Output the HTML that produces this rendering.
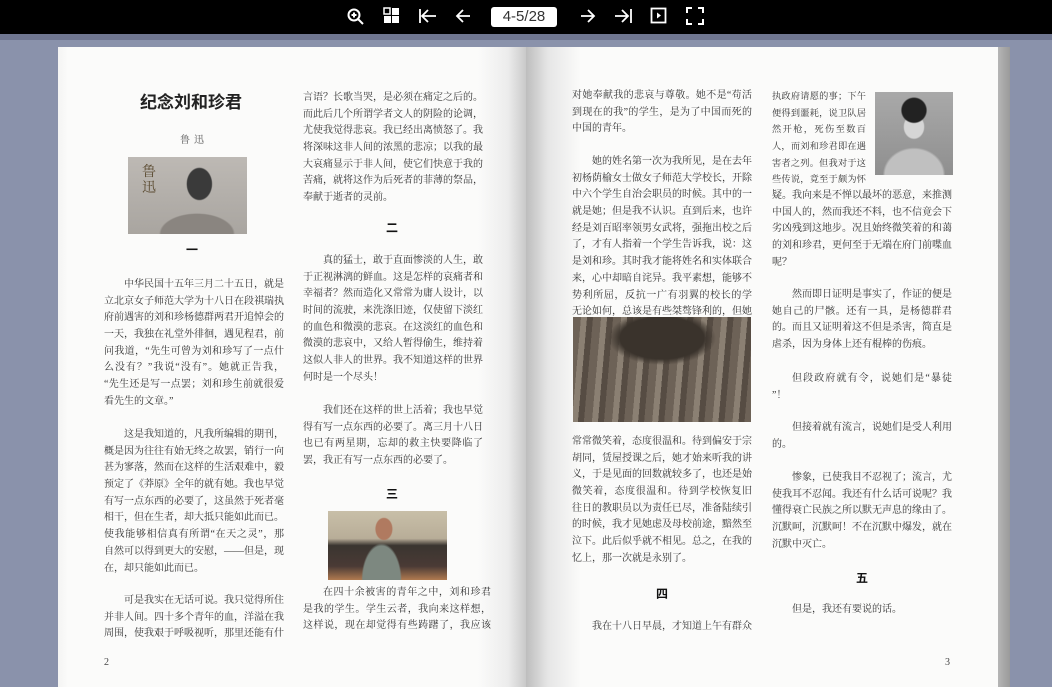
<!DOCTYPE html>
<html><head><meta charset="utf-8">
<style>
*{margin:0;padding:0;box-sizing:border-box}
body{width:1052px;height:684px;overflow:hidden;background:#8a92ab;position:relative;font-family:"Liberation Serif","Noto Serif CJK SC",serif;color:#222}
#bar{position:absolute;left:0;top:0;width:1052px;height:34px;background:#000}
#band{position:absolute;left:0;top:34px;width:1052px;height:6px;background:#6f7690}
.pg{position:absolute;top:47px;height:640px;background:#fbfbfa}
#lp{left:58px;width:468px;background:linear-gradient(to right,#f4f4f3 0,#fbfbfa 10px,#fbfbfa 420px,#ececec 450px,#c9c9c9 468px)}
#rp{left:526px;width:472px;background:linear-gradient(to right,#bdbdbd 0,#e6e6e6 22px,#fbfbfa 55px,#fbfbfa 470px)}
#edge{position:absolute;left:998px;top:47px;width:12px;height:640px;background:linear-gradient(to right,#b5b5b5,#9a9a9a)}
.b{position:absolute;width:180px;font-size:10px;line-height:16.7px;color:#333}
.b div{height:16.7px;overflow:hidden;white-space:nowrap}
.b div.j{text-align:justify;text-align-last:justify;white-space:normal}
.i{text-indent:20px}
.n{font-size:9.2px}
.h{position:absolute;font-family:"Liberation Sans","Noto Sans CJK SC",sans-serif;font-weight:bold;font-size:12px;color:#111}
.img{position:absolute}
.ic{position:absolute;top:7px}
</style></head><body>
<div id="bar"></div><div id="band"></div>
<svg class="ic" style="left:346px" width="20" height="20" viewBox="0 0 20 20"><circle cx="8" cy="8" r="5.5" fill="none" stroke="#fff" stroke-width="2"/><path d="M12 12l5 5M5.5 8h5M8 5.5v5" stroke="#fff" stroke-width="2"/></svg>
<svg class="ic" style="left:383px" width="18" height="18" viewBox="0 0 18 18"><rect x="1" y="1" width="6" height="6" fill="none" stroke="#fff" stroke-width="1.5"/><rect x="9" y="1" width="7" height="7" fill="#fff"/><rect x="1" y="9" width="7" height="7" fill="#fff"/><rect x="9" y="9" width="7" height="7" fill="#fff"/></svg>
<svg class="ic" style="left:418px" width="20" height="20" viewBox="0 0 20 20"><path d="M2 2v14M18 9H5M10 3l-6 6 6 6" stroke="#fff" stroke-width="1.8" fill="none"/></svg>
<svg class="ic" style="left:453px" width="20" height="20" viewBox="0 0 20 20"><path d="M17 9H4M10 3l-6 6 6 6" stroke="#fff" stroke-width="1.8" fill="none"/></svg>
<div style="position:absolute;left:491px;top:7px;width:66px;height:20px;background:#fff;border-radius:3px;font-family:'Liberation Sans',sans-serif;font-size:15px;line-height:20px;text-align:center;color:#333">4-5/28</div>
<svg class="ic" style="left:578px" width="20" height="20" viewBox="0 0 20 20"><path d="M3 9h13M10 3l6 6-6 6" stroke="#fff" stroke-width="1.8" fill="none"/></svg>
<svg class="ic" style="left:613px" width="20" height="20" viewBox="0 0 20 20"><path d="M2 9h13M9 3l6 6-6 6M18 2v14" stroke="#fff" stroke-width="1.8" fill="none"/></svg>
<svg class="ic" style="left:650px" width="18" height="18" viewBox="0 0 18 18"><rect x="1.5" y="1.5" width="14" height="14" fill="none" stroke="#fff" stroke-width="1.8"/><path d="M7 5.5l4 3-4 3z" fill="#fff"/></svg>
<svg class="ic" style="left:686px" width="18" height="18" viewBox="0 0 18 18"><path d="M1 6V1h5M12 1h5v5M17 12v5h-5M6 17H1v-5" stroke="#fff" stroke-width="2" fill="none"/></svg>

<div class="pg" id="lp"></div><div class="pg" id="rp"></div><div id="edge"></div>

<div class="h" style="left:140px;top:88px;font-size:17px;color:#222">纪念刘和珍君</div>
<div style="position:absolute;left:180px;top:131px;font-size:10px;color:#555;letter-spacing:4px">鲁迅</div>
<div class="img" style="left:128px;top:157px;width:119px;height:77px;background:radial-gradient(ellipse 22px 28px at 60% 35%,#3a3a3a 0 55%,transparent 60%),radial-gradient(ellipse 40px 22px at 58% 100%,#8a8580 0 90%,transparent 95%),linear-gradient(#bdb9b4,#a9a5a0)"><span style="position:absolute;left:14px;top:8px;font-size:14px;line-height:16px;color:#5a4a30;width:16px">鲁迅</span></div>
<div class="h" style="left:186px;top:241px">一</div>
<div class="b" style="left:104px;top:277px">
<div class="j i">中华民国十五年三月二十五日，就是国</div>
<div class="j">立北京女子师范大学为十八日在段祺瑞执政</div>
<div class="j">府前遇害的刘和珍杨德群两君开追悼会的那</div>
<div class="j">一天，我独在礼堂外徘徊，遇见程君，前来</div>
<div class="j">问我道，“先生可曾为刘和珍写了一点什</div>
<div class="j">么没有？”我说“没有”。她就正告我，</div>
<div class="j">“先生还是写一点罢；刘和珍生前就很爱</div>
<div>看先生的文章。”</div>
</div>
<div class="b" style="left:104px;top:427px">
<div class="j i">这是我知道的，凡我所编辑的期刊，大</div>
<div class="j">概是因为往往有始无终之故罢，销行一向就</div>
<div class="j">甚为寥落，然而在这样的生活艰难中，毅然</div>
<div class="j">预定了《莽原》全年的就有她。我也早觉得</div>
<div class="j">有写一点东西的必要了，这虽然于死者毫不</div>
<div class="j">相干，但在生者，却大抵只能如此而已。倘</div>
<div class="j">使我能够相信真有所谓“在天之灵”，那</div>
<div class="j">自然可以得到更大的安慰，——但是，现</div>
<div>在，却只能如此而已。</div>
</div>
<div class="b" style="left:104px;top:593px">
<div class="j i">可是我实在无话可说。我只觉得所住的</div>
<div class="j">并非人间。四十多个青年的血，洋溢在我的</div>
<div class="j">周围，使我艰于呼吸视听，那里还能有什么</div>
</div>
<div style="position:absolute;left:104px;top:657px;font-size:10px;color:#444">2</div>

<div class="b" style="left:303px;top:90px">
<div class="j">言语？长歌当哭，是必须在痛定之后的。</div>
<div class="j">而此后几个所谓学者文人的阴险的论调，</div>
<div class="j">尤使我觉得悲哀。我已经出离愤怒了。我</div>
<div class="j">将深味这非人间的浓黑的悲凉；以我的最</div>
<div class="j">大哀痛显示于非人间，使它们快意于我的</div>
<div class="j">苦痛，就将这作为后死者的菲薄的祭品，</div>
<div>奉献于逝者的灵前。</div>
</div>
<div class="h" style="left:386px;top:219px">二</div>
<div class="b" style="left:303px;top:253px">
<div class="j i">真的猛士，敢于直面惨淡的人生，敢</div>
<div class="j">于正视淋漓的鲜血。这是怎样的哀痛者和</div>
<div class="j">幸福者？然而造化又常常为庸人设计，以</div>
<div class="j">时间的流驶，来洗涤旧迹，仅使留下淡红</div>
<div class="j">的血色和微漠的悲哀。在这淡红的血色和</div>
<div class="j">微漠的悲哀中，又给人暂得偷生，维持着</div>
<div class="j">这似人非人的世界。我不知道这样的世界</div>
<div>何时是一个尽头！</div>
</div>
<div class="b" style="left:303px;top:403px">
<div class="j i">我们还在这样的世上活着；我也早觉</div>
<div class="j">得有写一点东西的必要了。离三月十八日</div>
<div class="j">也已有两星期，忘却的救主快要降临了</div>
<div>罢，我正有写一点东西的必要了。</div>
</div>
<div class="h" style="left:386px;top:485px">三</div>
<div class="img" style="left:328px;top:511px;width:119px;height:69px;background:radial-gradient(ellipse 10px 13px at 47% 26%,#b07a60 0 80%,transparent 90%),radial-gradient(ellipse 22px 40px at 45% 100%,#7d8880 0 85%,transparent 92%),linear-gradient(#c8bfa8 0,#b8ad98 40%,#3a3530 50%,#4a3a35 80%,#b07a50 100%)"></div>
<div class="b" style="left:303px;top:585px;width:188px">
<div class="j i">在四十余被害的青年之中，刘和珍君</div>
<div class="j">是我的学生。学生云者，我向来这样想，</div>
<div class="j">这样说，现在却觉得有些踌躇了，我应该</div>
</div>

<div class="b" style="left:572px;top:88px">
<div class="j">对她奉献我的悲哀与尊敬。她不是“苟活</div>
<div class="j">到现在的我”的学生，是为了中国而死的</div>
<div>中国的青年。</div>
</div>
<div class="b" style="left:572px;top:154px">
<div class="j i">她的姓名第一次为我所见，是在去年夏</div>
<div class="j">初杨荫榆女士做女子师范大学校长，开除校</div>
<div class="j">中六个学生自治会职员的时候。其中的一个</div>
<div class="j">就是她；但是我不认识。直到后来，也许已</div>
<div class="j">经是刘百昭率领男女武将，强拖出校之后</div>
<div class="j">了，才有人指着一个学生告诉我，说：这就</div>
<div class="j">是刘和珍。其时我才能将姓名和实体联合起</div>
<div class="j">来，心中却暗自诧异。我平素想，能够不为</div>
<div class="j">势利所屈，反抗一广有羽翼的校长的学生，</div>
<div class="j">无论如何，总该是有些桀骜锋利的，但她却</div>
</div>
<div class="img" style="left:573px;top:317px;width:178px;height:105px;background:radial-gradient(ellipse 60px 30px at 50% 20%,#3a332c 0 70%,transparent 90%),repeating-linear-gradient(95deg,#6d6257 0 8px,#8b8073 8px 14px,#564c43 14px 20px)"></div>
<div class="b" style="left:572px;top:434px">
<div class="j">常常微笑着，态度很温和。待到偏安于宗帽</div>
<div class="j">胡同，赁屋授课之后，她才始来听我的讲</div>
<div class="j">义，于是见面的回数就较多了，也还是始终</div>
<div class="j">微笑着，态度很温和。待到学校恢复旧观，</div>
<div class="j">往日的教职员以为责任已尽，准备陆续引退</div>
<div class="j">的时候，我才见她虑及母校前途，黯然至于</div>
<div class="j">泣下。此后似乎就不相见。总之，在我的记</div>
<div>忆上，那一次就是永别了。</div>
</div>
<div class="h" style="left:656px;top:585px">四</div>
<div class="b" style="left:572px;top:619px">
<div class="j i">我在十八日早晨，才知道上午有群众向</div>
</div>

<div class="img" style="left:875px;top:92px;width:78px;height:83px;background:radial-gradient(ellipse 14px 14px at 50% 22%,#222 0 85%,transparent 95%),radial-gradient(ellipse 12px 14px at 50% 42%,#d6d6d6 0 80%,transparent 90%),radial-gradient(ellipse 34px 30px at 50% 100%,#c0c0c0 0 85%,transparent 92%),linear-gradient(#a9a9a9,#8f8f8f)"></div>
<div class="b n" style="left:772px;top:88px;width:94px">
<div class="j">执政府请愿的事；下午</div>
<div class="j">便得到噩耗，说卫队居</div>
<div class="j">然开枪，死伤至数百</div>
<div class="j">人，而刘和珍君即在遇</div>
<div class="j">害者之列。但我对于这</div>
<div class="j">些传说，竟至于颇为怀</div>
</div>
<div class="b" style="left:772px;top:188px">
<div class="j">疑。我向来是不惮以最坏的恶意，来推测</div>
<div class="j">中国人的，然而我还不料，也不信竟会下</div>
<div class="j">劣凶残到这地步。况且始终微笑着的和蔼</div>
<div class="j">的刘和珍君，更何至于无端在府门前喋血</div>
<div>呢？</div>
</div>
<div class="b" style="left:772px;top:287px">
<div class="j i">然而即日证明是事实了，作证的便是</div>
<div class="j">她自己的尸骸。还有一具，是杨德群君</div>
<div class="j">的。而且又证明着这不但是杀害，简直是</div>
<div>虐杀，因为身体上还有棍棒的伤痕。</div>
</div>
<div class="b" style="left:772px;top:371px">
<div class="j i">但段政府就有令，说她们是“暴徒</div>
<div>”！</div>
</div>
<div class="b" style="left:772px;top:420px">
<div class="j i">但接着就有流言，说她们是受人利用</div>
<div>的。</div>
</div>
<div class="b" style="left:772px;top:470px">
<div class="j i">惨象，已使我目不忍视了；流言，尤</div>
<div class="j">使我耳不忍闻。我还有什么话可说呢？我</div>
<div class="j">懂得衰亡民族之所以默无声息的缘由了。</div>
<div class="j">沉默呵，沉默呵！不在沉默中爆发，就在</div>
<div>沉默中灭亡。</div>
</div>
<div class="h" style="left:856px;top:569px">五</div>
<div class="b" style="left:772px;top:602px">
<div class="i">但是，我还有要说的话。</div>
</div>
<div style="position:absolute;left:945px;top:657px;font-size:10px;color:#444">3</div>
</body></html>
